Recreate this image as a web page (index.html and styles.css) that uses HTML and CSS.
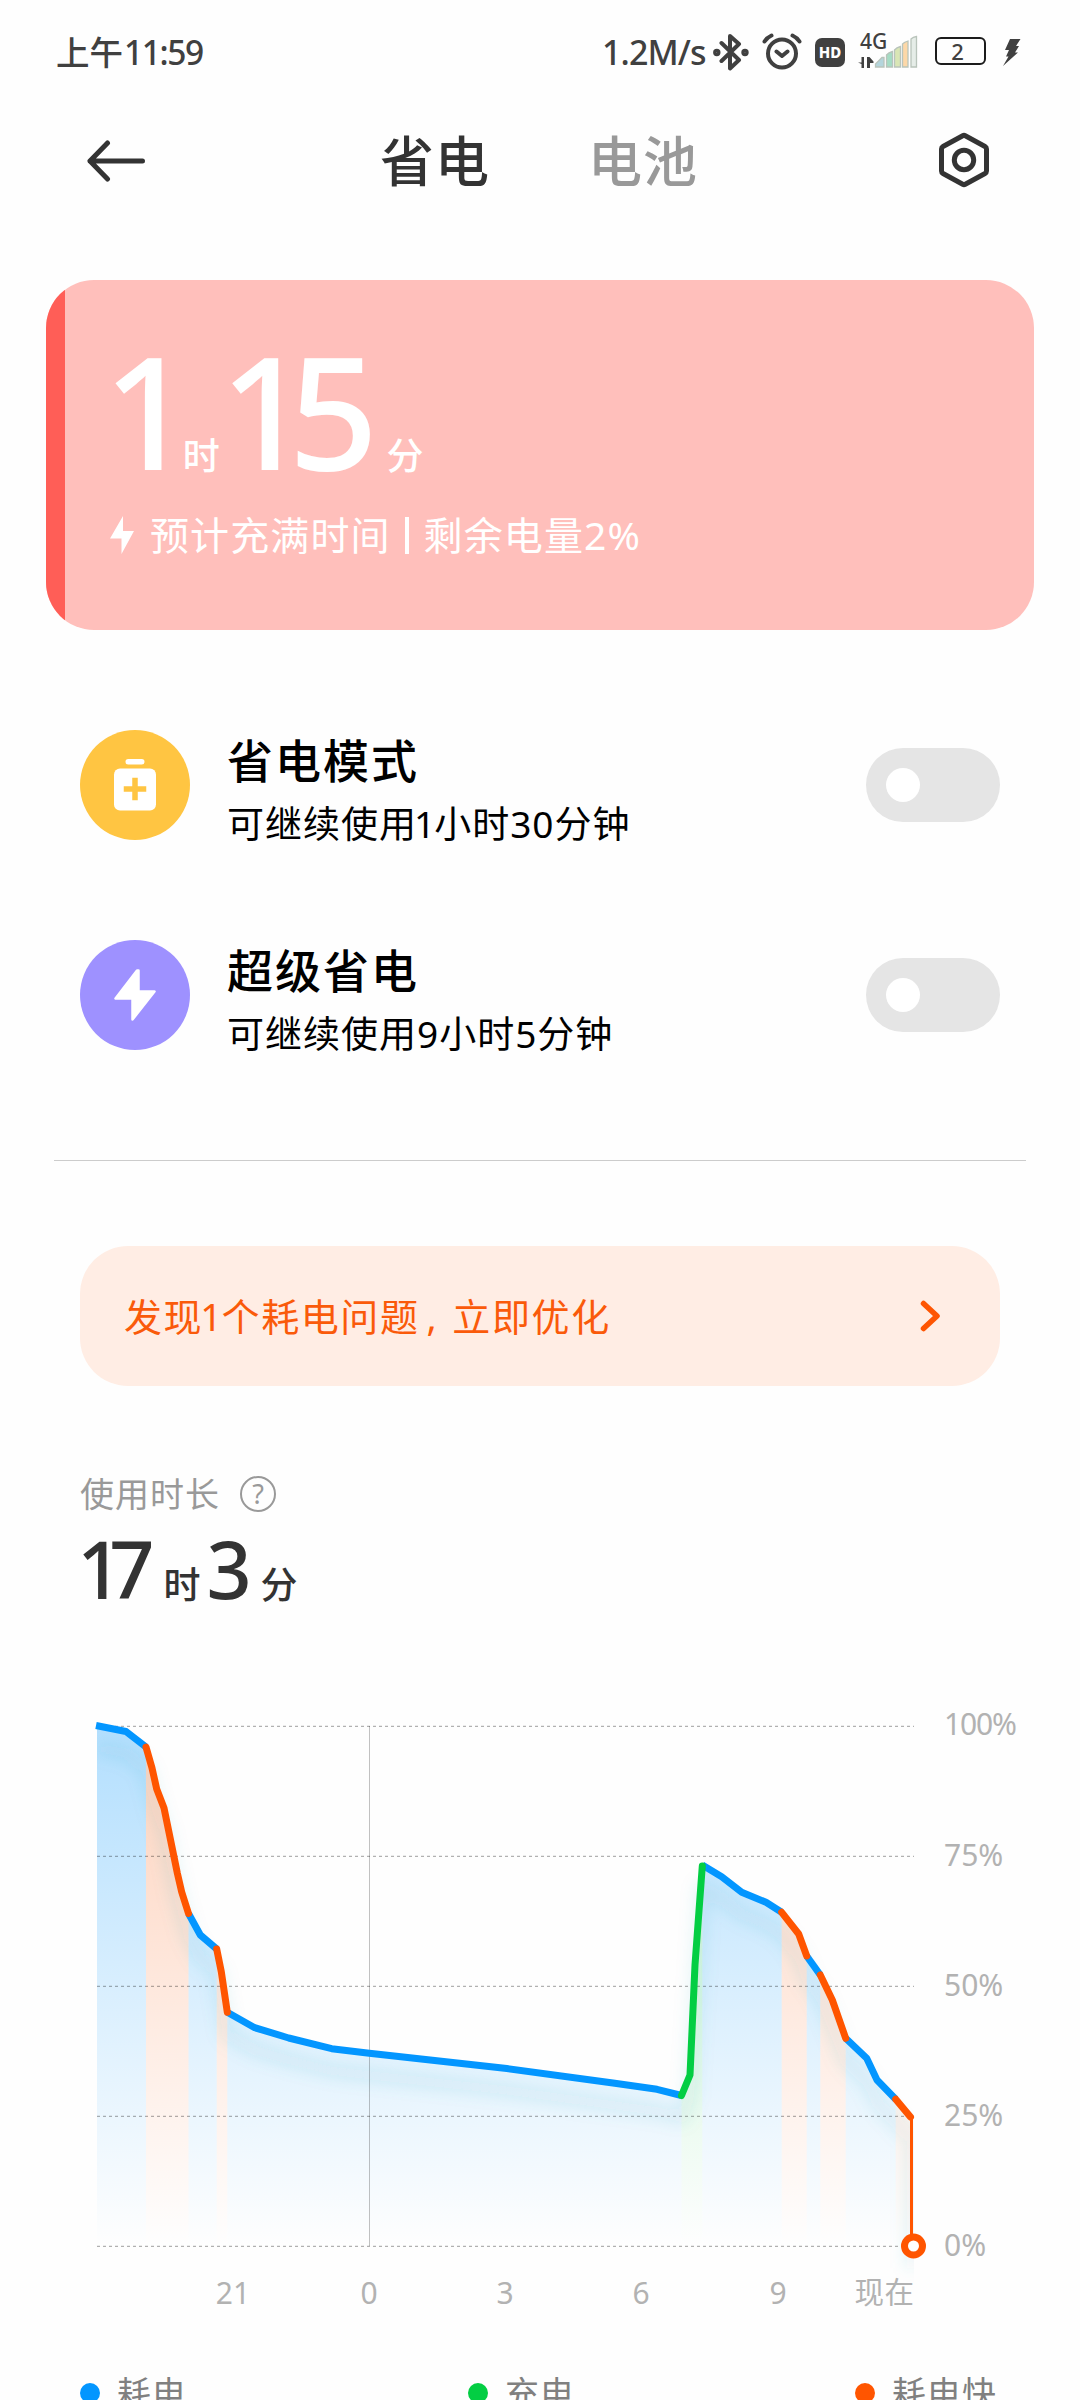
FILE: index.html
```html
<!DOCTYPE html>
<html lang="zh-CN">
<head>
<meta charset="utf-8">
<title>省电与电池</title>
<link rel="stylesheet" href="styles.css">
</head>
<body>
<div class="screen">
  <div class="status">
    <span class="clock">上午<span class="clock-num">11:59</span></span>
    <div class="status-right">
      <span class="speed">1.2M/s</span>
      <svg class="ic-bt" width="36" height="38" viewBox="0 0 36 38" fill="none" stroke="#404040" stroke-width="4" stroke-linejoin="round" stroke-linecap="round"><path d="M8.500 10 26 27l-9 8.500V3L26 11 8.500 28"/><circle cx="3.800" cy="19.500" r="1.700" /><circle cx="32" cy="19.500" r="1.700"/></svg>
      <svg class="ic-alarm" width="40" height="38" viewBox="0 0 40 38" fill="none" stroke="#404040" stroke-width="4" stroke-linecap="round" stroke-linejoin="round"><circle cx="20" cy="20.500" r="14"/><path d="m14.500 18.500 5.500 4.500 5.500-4.500M2.500 8.500Q5 4.500 9.500 2.500M37.500 8.500Q35 4.500 30.500 2.500"/></svg>
      <span class="hd">HD</span>
      <div class="cell">
        <span class="net">4G</span>
        <svg class="ic-signal" width="61" height="33" viewBox="0 0 61 33"><path d="M6 22v11H3.500v-4L0 27.500h3.500V22zM9 22h2.500l4 4.500v1.500H12V33H9z" fill="#404040"/><g stroke="#b9c4bb" stroke-width="1.300"><path d="M17.500 32V29L24 22.500h2V32z" fill="#b4d5dc"/><path d="M28.500 32V20q2-2.500 6-3.500V32z" fill="#a5dcc4"/><path d="M36.500 32V15q2-2.500 6-3.500V32z" fill="#d9e6b5"/><path d="M44.500 32V9q2-2 5.500-3V32z" fill="#fdd8a8"/><path d="M53 32V4q2-2 5.500-2.500V32z" fill="#e6ede8"/></g></svg>
      </div>
      <span class="battery">2</span>
      <svg class="ic-charge" width="19" height="29" viewBox="0 0 19 29"><path d="M8 1h10.500l-4.500 7h3l-4 6.500h3L1 28l5.500-9.500H4L7 12H3z" fill="#404040"/></svg>
    </div>
  </div>

  <div class="header">
    <svg class="back" width="60" height="42" viewBox="0 0 60 42" fill="none" stroke="#333" stroke-width="5" stroke-linecap="round" stroke-linejoin="round"><path d="M21.500 3 4 21l17.500 18M4 21h52.500"/></svg>
    <div class="tab active">省电</div>
    <div class="tab">电池</div>
    <svg class="settings" width="52" height="56" viewBox="0 0 52 56" fill="none" stroke="#333" stroke-width="5" stroke-linejoin="round"><path d="M24.700 3.700q1.300-.7 2.600 0L47 14.500q1.500.8 1.500 2.500v22q0 1.700-1.500 2.500L27.300 52.300q-1.300.7-2.600 0L5 41.500Q3.500 40.700 3.500 39V17q0-1.700 1.500-2.500z"/><circle cx="26" cy="28" r="9.700"/></svg>
  </div>

  <div class="card">
    <div class="level"></div>
    <div class="card-body">
      <div class="big"><span class="num">1</span><span class="unit u1">时</span><span class="num n2">15</span><span class="unit u2">分</span></div>
      <div class="sub"><svg width="24" height="38" viewBox="0 0 24 38"><path d="M13 0v15h11L11.500 38V22.500H0z" fill="#fff"/></svg><span>预计充满时间<i class="bar"></i>剩余电量2%</span></div>
    </div>
  </div>

  <div class="modes">
    <div class="mode">
      <div class="mode-icon yellow"><svg width="110" height="110" viewBox="0 0 110 110"><rect x="45.500" y="29" width="19" height="5.500" rx="2.700" fill="#fff"/><rect x="34" y="38.500" width="42" height="42" rx="6" fill="#fff"/><path d="M55 50.500v17M46.500 59h17" stroke="#ffc542" stroke-width="5.500" stroke-linecap="square" /></svg></div>
      <div class="mode-text"><div class="mode-title">省电模式</div><div class="mode-sub">可继续使用<i class="one">1</i>小时30分钟</div></div>
      <div class="toggle"><div class="knob"></div></div>
    </div>
    <div class="mode">
      <div class="mode-icon purple"><svg width="110" height="110" viewBox="0 0 110 110"><path d="M57 30.500 35.500 58.500H52.500V79.500L74.500 51.500H58.500V30.500z" fill="#fff" stroke="#fff" stroke-width="2.500" stroke-linejoin="round"/></svg></div>
      <div class="mode-text"><div class="mode-title">超级省电</div><div class="mode-sub">可继续使用9小时5分钟</div></div>
      <div class="toggle"><div class="knob"></div></div>
    </div>
  </div>

  <div class="divider"></div>

  <div class="banner"><span>发现<i class="one">1</i>个耗电问题<b class="comma">,</b>立即优化</span><svg width="20" height="34" viewBox="0 0 20 34" fill="none" stroke="#fe5502" stroke-width="5.500" stroke-linecap="round" stroke-linejoin="round"><path d="m3.500 4.500 13.500 12.500L3.500 29.500"/></svg></div>

  <div class="usage-label">使用时长<span class="help">?</span></div>
  <div class="usage"><span class="num">17</span><span class="unit u1">时</span><span class="num n2">3</span><span class="unit u2">分</span></div>

  <svg class="chart" width="1080" height="640" viewBox="0 1690 1080 640">
    <defs>
      <linearGradient id="gb" gradientUnits="userSpaceOnUse" x1="0" y1="1726" x2="0" y2="2246"><stop offset="0" stop-color="#0396ff" stop-opacity=".3"/><stop offset="1" stop-color="#0396ff" stop-opacity="0"/></linearGradient>
      <linearGradient id="go" gradientUnits="userSpaceOnUse" x1="0" y1="1726" x2="0" y2="2246"><stop offset="0" stop-color="#ff5500" stop-opacity=".26"/><stop offset="1" stop-color="#ff5500" stop-opacity="0"/></linearGradient>
      <linearGradient id="gg" gradientUnits="userSpaceOnUse" x1="0" y1="1726" x2="0" y2="2246"><stop offset="0" stop-color="#06d043" stop-opacity=".3"/><stop offset="1" stop-color="#06d043" stop-opacity="0"/></linearGradient>
      <filter id="soft" x="-10%" y="-10%" width="120%" height="120%"><feGaussianBlur stdDeviation="8"/></filter>
      <clipPath id="plot"><rect x="97" y="1700" width="817" height="600"/></clipPath>
    </defs>
    <g fill="url(#gb)">
      <path d="M97 1725.500 126 1731.500 146 1747V2246H97z"/>
      <path d="M188.500 1913.500 200.300 1935 216.700 1949V2246H188.500z"/>
      <path d="M227.300 2012.300 254.700 2027.700 288.700 2038 331.700 2048.700 369.300 2053.300 506.800 2068.500 613 2083 657 2089.300 681.500 2095.500V2246H227.300z"/>
      <path d="M702.300 1865 721.700 1876.700 741.700 1892.300 766 1902.300 781.700 1912.300V2246H702.300z"/>
      <path d="M806.700 1956 820.300 1975V2246H806.700z"/>
      <path d="M845.700 2038.300 866.700 2058.300 877 2080 895.700 2099.300V2246H845.700z"/>
    </g>
    <g fill="url(#go)">
      <path d="M146 1747 152 1768 156.700 1789 164 1808 177.300 1873 181.700 1892 188.500 1913.500V2246H146z"/>
      <path d="M216.700 1949 221.300 1971.700 227.300 2012.300V2246H216.700z"/>
      <path d="M781.700 1912.300 798.700 1934 806.700 1956V2246H781.700z"/>
      <path d="M820.300 1975 832.300 2000 845.700 2038.300V2246H820.300z"/>
      <path d="M895.700 2099.300 911.300 2117.300V2246H895.700z"/>
    </g>
    <path fill="url(#gg)" d="M681.500 2095.500 690 2075 702.300 1865V2246H681.500z"/>
    <g clip-path="url(#plot)"><path filter="url(#soft)" transform="translate(0 22)" fill="none" stroke="#2f9fae" stroke-opacity=".12" stroke-width="12" stroke-linejoin="round" d="M97 1725.500 126 1731.500 146 1747 156.700 1789 164 1808 177.300 1873 188.500 1913.500 200.300 1935 216.700 1949 227.300 2012.300 254.700 2027.700 288.700 2038 331.700 2048.700 369.300 2053.300 506.800 2068.500 657 2089.300 681.500 2095.500 690 2075 702.300 1865 721.700 1876.700 741.700 1892.300 766 1902.300 781.700 1912.300 798.700 1934 806.700 1956 820.300 1975 845.700 2038.300 866.700 2058.300 877 2080 911.300 2117.300V2246"/></g>
    <g stroke="#000" stroke-opacity=".3" stroke-width="1.300" stroke-dasharray="3 3"><path d="M97 1726.300H914M97 1856.300H914M97 1986.300H914M97 2116.300H914M97 2246.300H914"/></g>
    <path d="M369.500 1726V2246" stroke="#000" stroke-opacity=".24" stroke-width="1"/>
    <g fill="none" stroke-width="7" stroke-linejoin="round">
      <g stroke="#0396ff">
        <path d="M96 1725.500 126 1731.500 146 1747"/>
        <path d="M188.500 1913.500 200.300 1935 216.700 1949"/>
        <path d="M227.300 2012.300 254.700 2027.700 288.700 2038 331.700 2048.700 369.300 2053.300 506.800 2068.500 613 2083 657 2089.300 681.500 2095.500"/>
        <path d="M702.300 1865 721.700 1876.700 741.700 1892.300 766 1902.300 781.700 1912.300"/>
        <path d="M806.700 1956 820.300 1975"/>
        <path d="M845.700 2038.300 866.700 2058.300 877 2080 895.700 2099.300"/>
      </g>
      <path stroke="#03ce43" stroke-linecap="round" d="M681.500 2095.500 690 2075 695 1965 702.300 1866"/>
      <g stroke="#ff5500" stroke-linecap="round">
        <path d="M146 1747 152 1768 156.700 1789 164 1808 177.300 1873 181.700 1892 188.500 1913.500"/>
        <path d="M216.700 1949 221.300 1971.700 227.300 2012.300"/>
        <path d="M781.700 1912.300 798.700 1934 806.700 1956"/>
        <path d="M820.300 1975 832.300 2000 845.700 2038.300"/>
        <path d="M895.700 2099.300 910.500 2117"/>
      </g>
      <path d="M911.500 2116V2238" stroke="#ff5500" stroke-width="3"/>
      <circle cx="913.500" cy="2246" r="9" fill="#fff" stroke="#ff5500"/>
    </g>
    <g class="axis">
      <text x="944" y="1735" textLength="73" lengthAdjust="spacing">100%</text><text x="944" y="1865.500">75%</text><text x="944" y="1995.500">50%</text><text x="944" y="2125.500">25%</text><text x="944" y="2255.500">0%</text>
      <g text-anchor="middle"><text x="233" y="2303.500">21</text><text x="369" y="2303.500">0</text><text x="505" y="2303.500">3</text><text x="641" y="2303.500">6</text><text x="778" y="2303.500">9</text></g>
      <text x="854.500" y="2302.500" class="now">现在</text>
    </g>
  </svg>

  <div class="legend">
    <div class="key"><i class="dot blue"></i>耗电</div>
    <div class="key"><i class="dot green"></i>充电</div>
    <div class="key"><i class="dot orange"></i>耗电快</div>
  </div>
</div>
</body>
</html>
```
FILE: styles.css
```css
* { box-sizing: border-box; }
body { margin: 0; background: #fefefe; }
.screen {
  width: 1080px; height: 2400px; overflow: hidden; background: #fefefe; color: #333;
  font-family: "Noto Sans", "Noto Sans CJK SC", sans-serif; white-space: nowrap;
}
svg { display: block; flex: none; }
i, b { font-style: normal; font-weight: inherit; }

.status { height: 106px; padding: 0 0 2px 56px; display: flex; align-items: center; justify-content: space-between; font-size: 33.5px; font-weight: 500; color: #404040; line-height: 40px; }
.clock-num { letter-spacing: -1.4px; margin-left: 1px; }
.status-right { width: 478px; display: flex; align-items: center; }
.speed { width: 108px; font-size: 34px; letter-spacing: -0.9px; }
.ic-bt { margin-left: 3px; }
.ic-alarm { margin-left: 13px; }
.hd { margin-left: 13px; width: 30px; height: 29px; border-radius: 7px; background: #404040; color: #fff; font-size: 15px; font-weight: 800; line-height: 28px; text-align: center; }
.cell { width: 61px; height: 33px; margin-left: 13px; margin-top: -2px; display: grid; }
.cell > * { grid-area: 1 / 1; }
.net { font-size: 21px; line-height: 12px; padding-left: 2px; }
.battery { margin-left: 16px; margin-top: -3px; width: 51px; height: 28px; border: 2px solid #1c1c1c; border-radius: 6px; font-size: 22px; line-height: 25px; text-align: center; padding-right: 6px; }
.ic-charge { margin-left: 16px; }

.header { height: 110px; display: flex; align-items: center; font-size: 54px; font-weight: 500; line-height: 80px; }
.back { margin-left: 86px; }
.tab { width: 108px; margin-left: 100px; color: #999; letter-spacing: 1px; margin-top: -1px; }
.tab.active { color: #333; margin-left: 234px; }
.settings { margin-left: 242px; margin-top: -2px; }

.card { margin: 64px 46px 0; height: 350px; border-radius: 48px; overflow: hidden; background: #ffbfbb; display: flex; color: #fff; }
.level { width: 19px; background: #ff5e57; }
.card-body { padding: 49px 0 0 38px; }
.big { display: flex; align-items: baseline; height: 160px; line-height: 160px; }
.big .num { font-size: 157px; letter-spacing: -21px; font-weight: 500; }
.unit { font-size: 37px; font-weight: 500; }
.big .u1 { margin-left: 11px; }
.big .u2 { margin-left: 29px; }
.sub { margin-top: 21px; padding-left: 7px; height: 50px; line-height: 50px; font-size: 39px; letter-spacing: 1.1px; display: flex; align-items: center; }
.sub span { margin-left: 16px; display: flex; align-items: center; }
.bar { width: 4px; height: 37px; background: #fff; margin: 0 15px 0 14px; }
.one { margin: 0 -2px 0 -3px; }

.modes { margin-top: 50px; }
.mode { height: 210px; padding: 0 80px; display: flex; align-items: center; }
.mode-icon { width: 110px; height: 110px; border-radius: 50%; }
.yellow { background: #ffc542; }
.purple { background: #9e91ff; }
.mode-text { flex: 1; padding: 10px 0 0 37px; color: #000; }
.mode-title { font-size: 46px; letter-spacing: 2px; font-weight: 500; line-height: 56px; }
.mode-sub { margin-top: 11px; font-size: 37px; letter-spacing: 1px; line-height: 50px; }
.toggle { width: 134px; height: 74px; border-radius: 37px; background: #e5e5e5; padding: 20px; }
.knob { width: 34px; height: 34px; border-radius: 50%; background: #fff; }

.divider { height: 1px; background: #ccc; margin: 60px 54px 0; }
.banner { margin: 85px 80px 0; height: 140px; border-radius: 48px; background: #ffede4; color: #fa5a0a; padding: 0 60px 0 44px; display: flex; align-items: center; justify-content: space-between; font-size: 38px; letter-spacing: 1.6px; }
.banner span { margin-top: -3px; }
.comma { margin: 0 14px 0 7px; }

.usage-label { margin: 86px 80px 0; height: 44px; line-height: 44px; font-size: 34px; letter-spacing: 1px; color: #999; display: flex; align-items: center; }
.help { margin-left: 20px; width: 36px; height: 36px; border: 2.500px solid #999; border-radius: 50%; font-size: 27px; line-height: 31px; text-align: center; letter-spacing: 0; }
.usage { margin: 13px 0 0 77px; height: 80px; line-height: 80px; display: flex; align-items: baseline; }
.usage .num { font-size: 79px; letter-spacing: -13px; font-weight: 500; }
.usage .u1 { margin-left: 22px; }
.usage .n2 { margin-left: 6px; }
.usage .u2 { margin-left: 22px; }

.chart { margin-top: 81px; }
.axis { fill: #b2b2b2; font-size: 30px; }
.now { font-size: 29.500px; letter-spacing: 0.500px; }

.legend { margin: 43px 80px 0; height: 40px; line-height: 40px; display: grid; grid-template-columns: 388px 387px 1fr; font-size: 34px; letter-spacing: 1px; color: #808080; }
.key { display: flex; align-items: center; }
.dot { width: 20px; height: 20px; border-radius: 50%; margin-right: 17px; }
.blue { background: #0396ff; }
.green { background: #03ce43; }
.orange { background: #ff5500; }
```
